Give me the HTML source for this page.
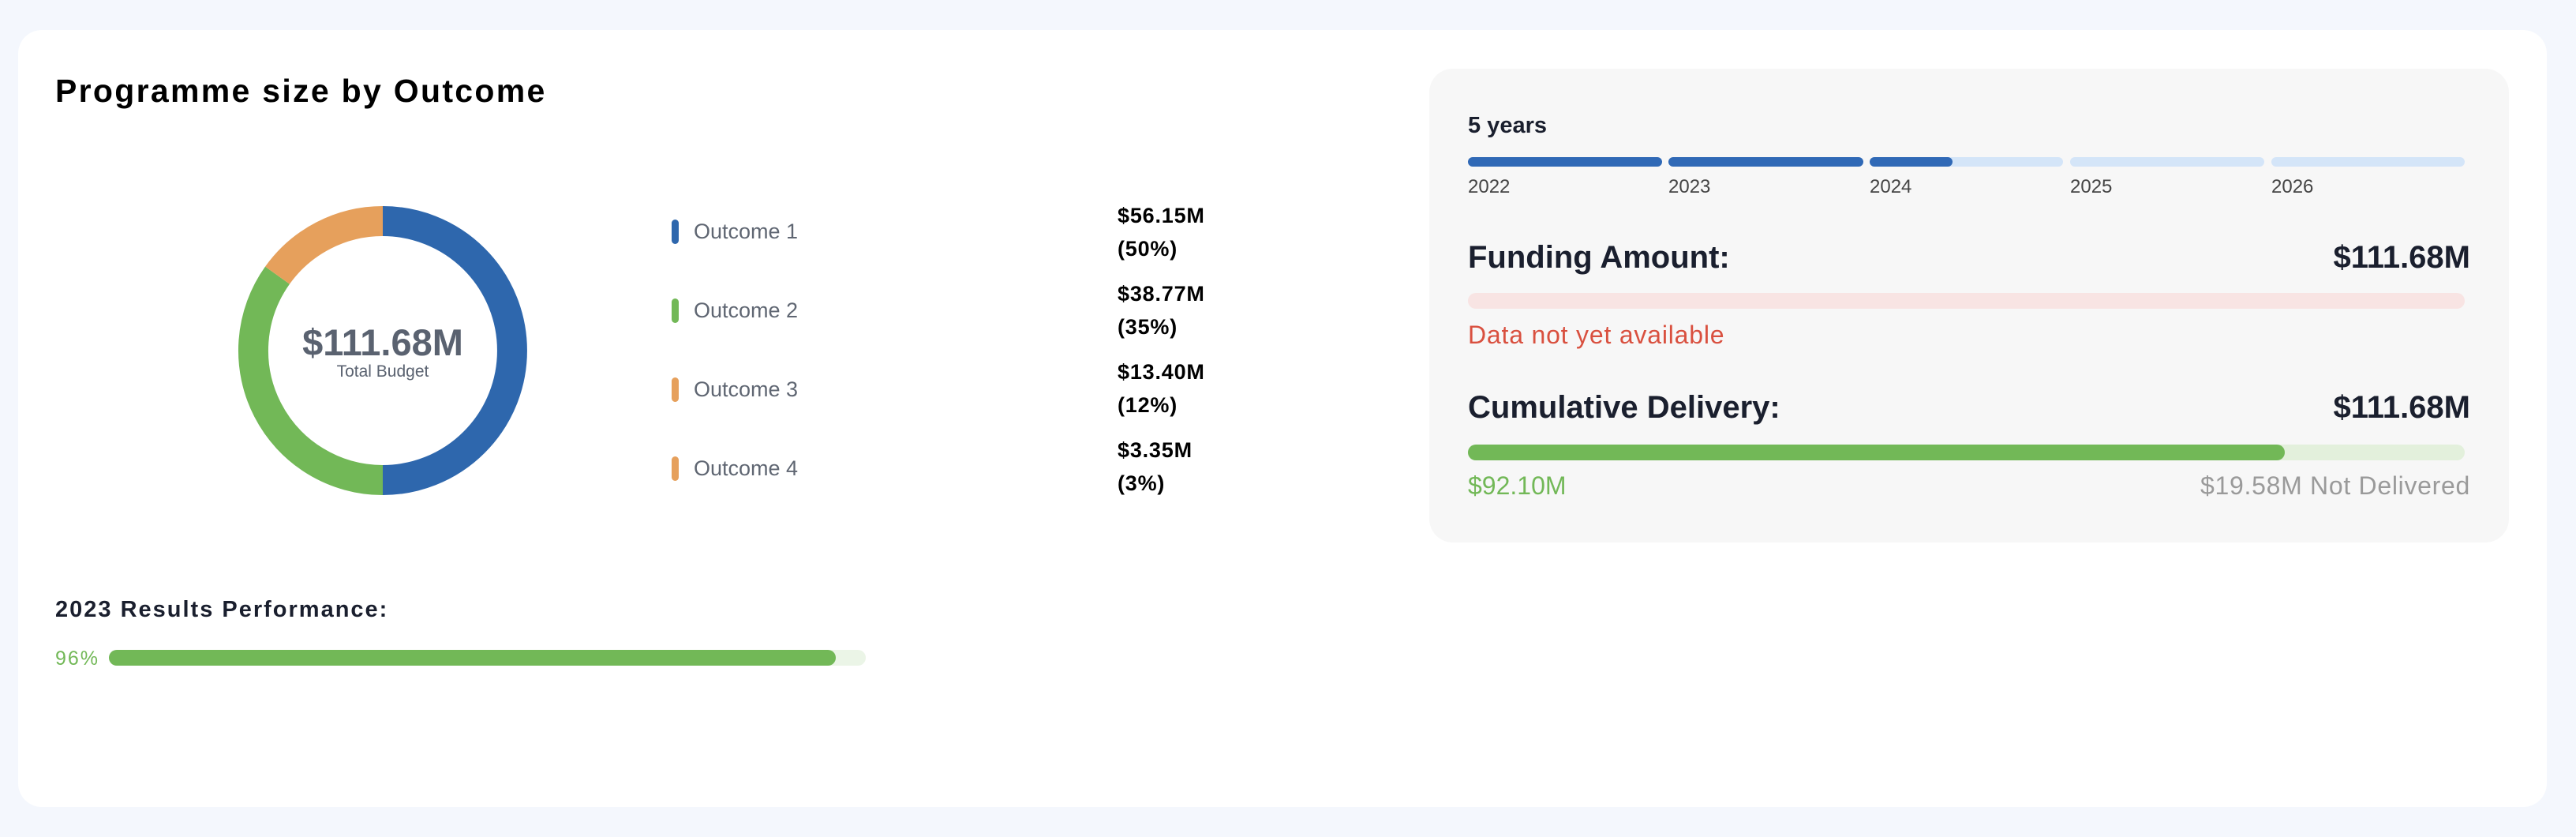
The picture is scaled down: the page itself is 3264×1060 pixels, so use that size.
<!DOCTYPE html>
<html><head><meta charset="utf-8"><style>
*{margin:0;padding:0;box-sizing:border-box}
body{width:3264px;height:1060px;background:#f4f7fd;font-family:"Liberation Sans",sans-serif;position:relative;overflow:hidden}
.a{position:absolute;line-height:1;white-space:nowrap}
.card{position:absolute;left:23px;top:38px;width:3204px;height:984px;background:#fff;border-radius:30px}
.panel{position:absolute;left:1811px;top:87px;width:1368px;height:600px;background:#f7f7f7;border-radius:30px}
.bar{position:absolute;border-radius:10px}
.lg{font-size:27px;color:#5f6672}
.mk{position:absolute;width:9px;height:31px;border-radius:5px;left:851px}
.val{font-size:27px;font-weight:bold;color:#000;left:1416px;letter-spacing:0.8px}
.yr{font-size:24px;color:#444}
</style></head><body>
<div class="card"></div>
<div class="a" style="left:70px;top:95px;font-size:41px;font-weight:bold;color:#000;letter-spacing:2.3px">Programme size by Outcome</div>

<svg style="position:absolute;left:0;top:0" width="1000" height="700">
<g fill="none" stroke-width="38">
<path d="M485 280 A164 164 0 0 1 485 608" stroke="#2e67ad"/>
<path d="M485 608 A164 164 0 0 1 351.5 348.7" stroke="#72b857"/>
<path d="M351.5 348.7 A164 164 0 0 1 485 280" stroke="#e6a05c"/>
</g>
</svg>
<div class="a" style="left:285px;width:400px;text-align:center;top:410px;font-size:47px;font-weight:bold;color:#5a6270">$111.68M</div>
<div class="a" style="left:285px;width:400px;text-align:center;top:460px;font-size:21px;color:#5a6270">Total Budget</div>

<div class="mk" style="top:278px;background:#2e67ad"></div>
<div class="mk" style="top:378px;background:#72b857"></div>
<div class="mk" style="top:478px;background:#e6a05c"></div>
<div class="mk" style="top:578px;background:#e6a05c"></div>
<div class="a lg" style="left:879px;top:280px">Outcome 1</div>
<div class="a lg" style="left:879px;top:380px">Outcome 2</div>
<div class="a lg" style="left:879px;top:480px">Outcome 3</div>
<div class="a lg" style="left:879px;top:580px">Outcome 4</div>
<div class="a val" style="top:260px">$56.15M</div><div class="a val" style="top:302px">(50%)</div>
<div class="a val" style="top:359px">$38.77M</div><div class="a val" style="top:401px">(35%)</div>
<div class="a val" style="top:458px">$13.40M</div><div class="a val" style="top:500px">(12%)</div>
<div class="a val" style="top:557px">$3.35M</div><div class="a val" style="top:599px">(3%)</div>

<div class="a" style="left:70px;top:758px;font-size:29px;font-weight:bold;color:#1a1f2e;letter-spacing:2px">2023 Results Performance:</div>
<div class="a" style="left:70px;top:822px;font-size:25px;color:#72b857;letter-spacing:2px">96%</div>
<div class="bar" style="left:138px;top:823px;width:959px;height:20px;background:#ebf5e7"></div>
<div class="bar" style="left:138px;top:823px;width:921px;height:20px;background:#72b857"></div>

<div class="panel"></div>
<div class="a" style="left:1860px;top:145px;font-size:29px;font-weight:bold;color:#1a1f2e">5 years</div>
<div class="bar" style="left:1860px;top:199px;width:246px;height:12px;background:#3069b6"></div>
<div class="bar" style="left:2114px;top:199px;width:247px;height:12px;background:#3069b6"></div>
<div class="bar" style="left:2369px;top:199px;width:245px;height:12px;background:#d4e5f8"></div>
<div class="bar" style="left:2369px;top:199px;width:105px;height:12px;background:#3069b6"></div>
<div class="bar" style="left:2623px;top:199px;width:246px;height:12px;background:#d4e5f8"></div>
<div class="bar" style="left:2878px;top:199px;width:245px;height:12px;background:#d4e5f8"></div>
<div class="a yr" style="left:1860px;top:225px">2022</div>
<div class="a yr" style="left:2114px;top:225px">2023</div>
<div class="a yr" style="left:2369px;top:225px">2024</div>
<div class="a yr" style="left:2623px;top:225px">2025</div>
<div class="a yr" style="left:2878px;top:225px">2026</div>

<div class="a" style="left:1860px;top:306px;font-size:40px;font-weight:bold;color:#1a1f2e">Funding Amount:</div>
<div class="a" style="right:134px;top:306px;font-size:40px;font-weight:bold;color:#1a1f2e">$111.68M</div>
<div class="bar" style="left:1860px;top:371px;width:1263px;height:20px;background:#f8e4e3"></div>
<div class="a" style="left:1860px;top:408px;font-size:32px;color:#d9503f;letter-spacing:0.8px">Data not yet available</div>

<div class="a" style="left:1860px;top:496px;font-size:40px;font-weight:bold;color:#1a1f2e">Cumulative Delivery:</div>
<div class="a" style="right:134px;top:496px;font-size:40px;font-weight:bold;color:#1a1f2e">$111.68M</div>
<div class="bar" style="left:1860px;top:563px;width:1263px;height:20px;background:#e3f0dc"></div>
<div class="bar" style="left:1860px;top:563px;width:1035px;height:20px;background:#72b857"></div>
<div class="a" style="left:1860px;top:599px;font-size:32px;color:#72b857">$92.10M</div>
<div class="a" style="right:134px;top:599px;font-size:32px;color:#9a9a9a;letter-spacing:0.7px">$19.58M Not Delivered</div>
</body></html>
